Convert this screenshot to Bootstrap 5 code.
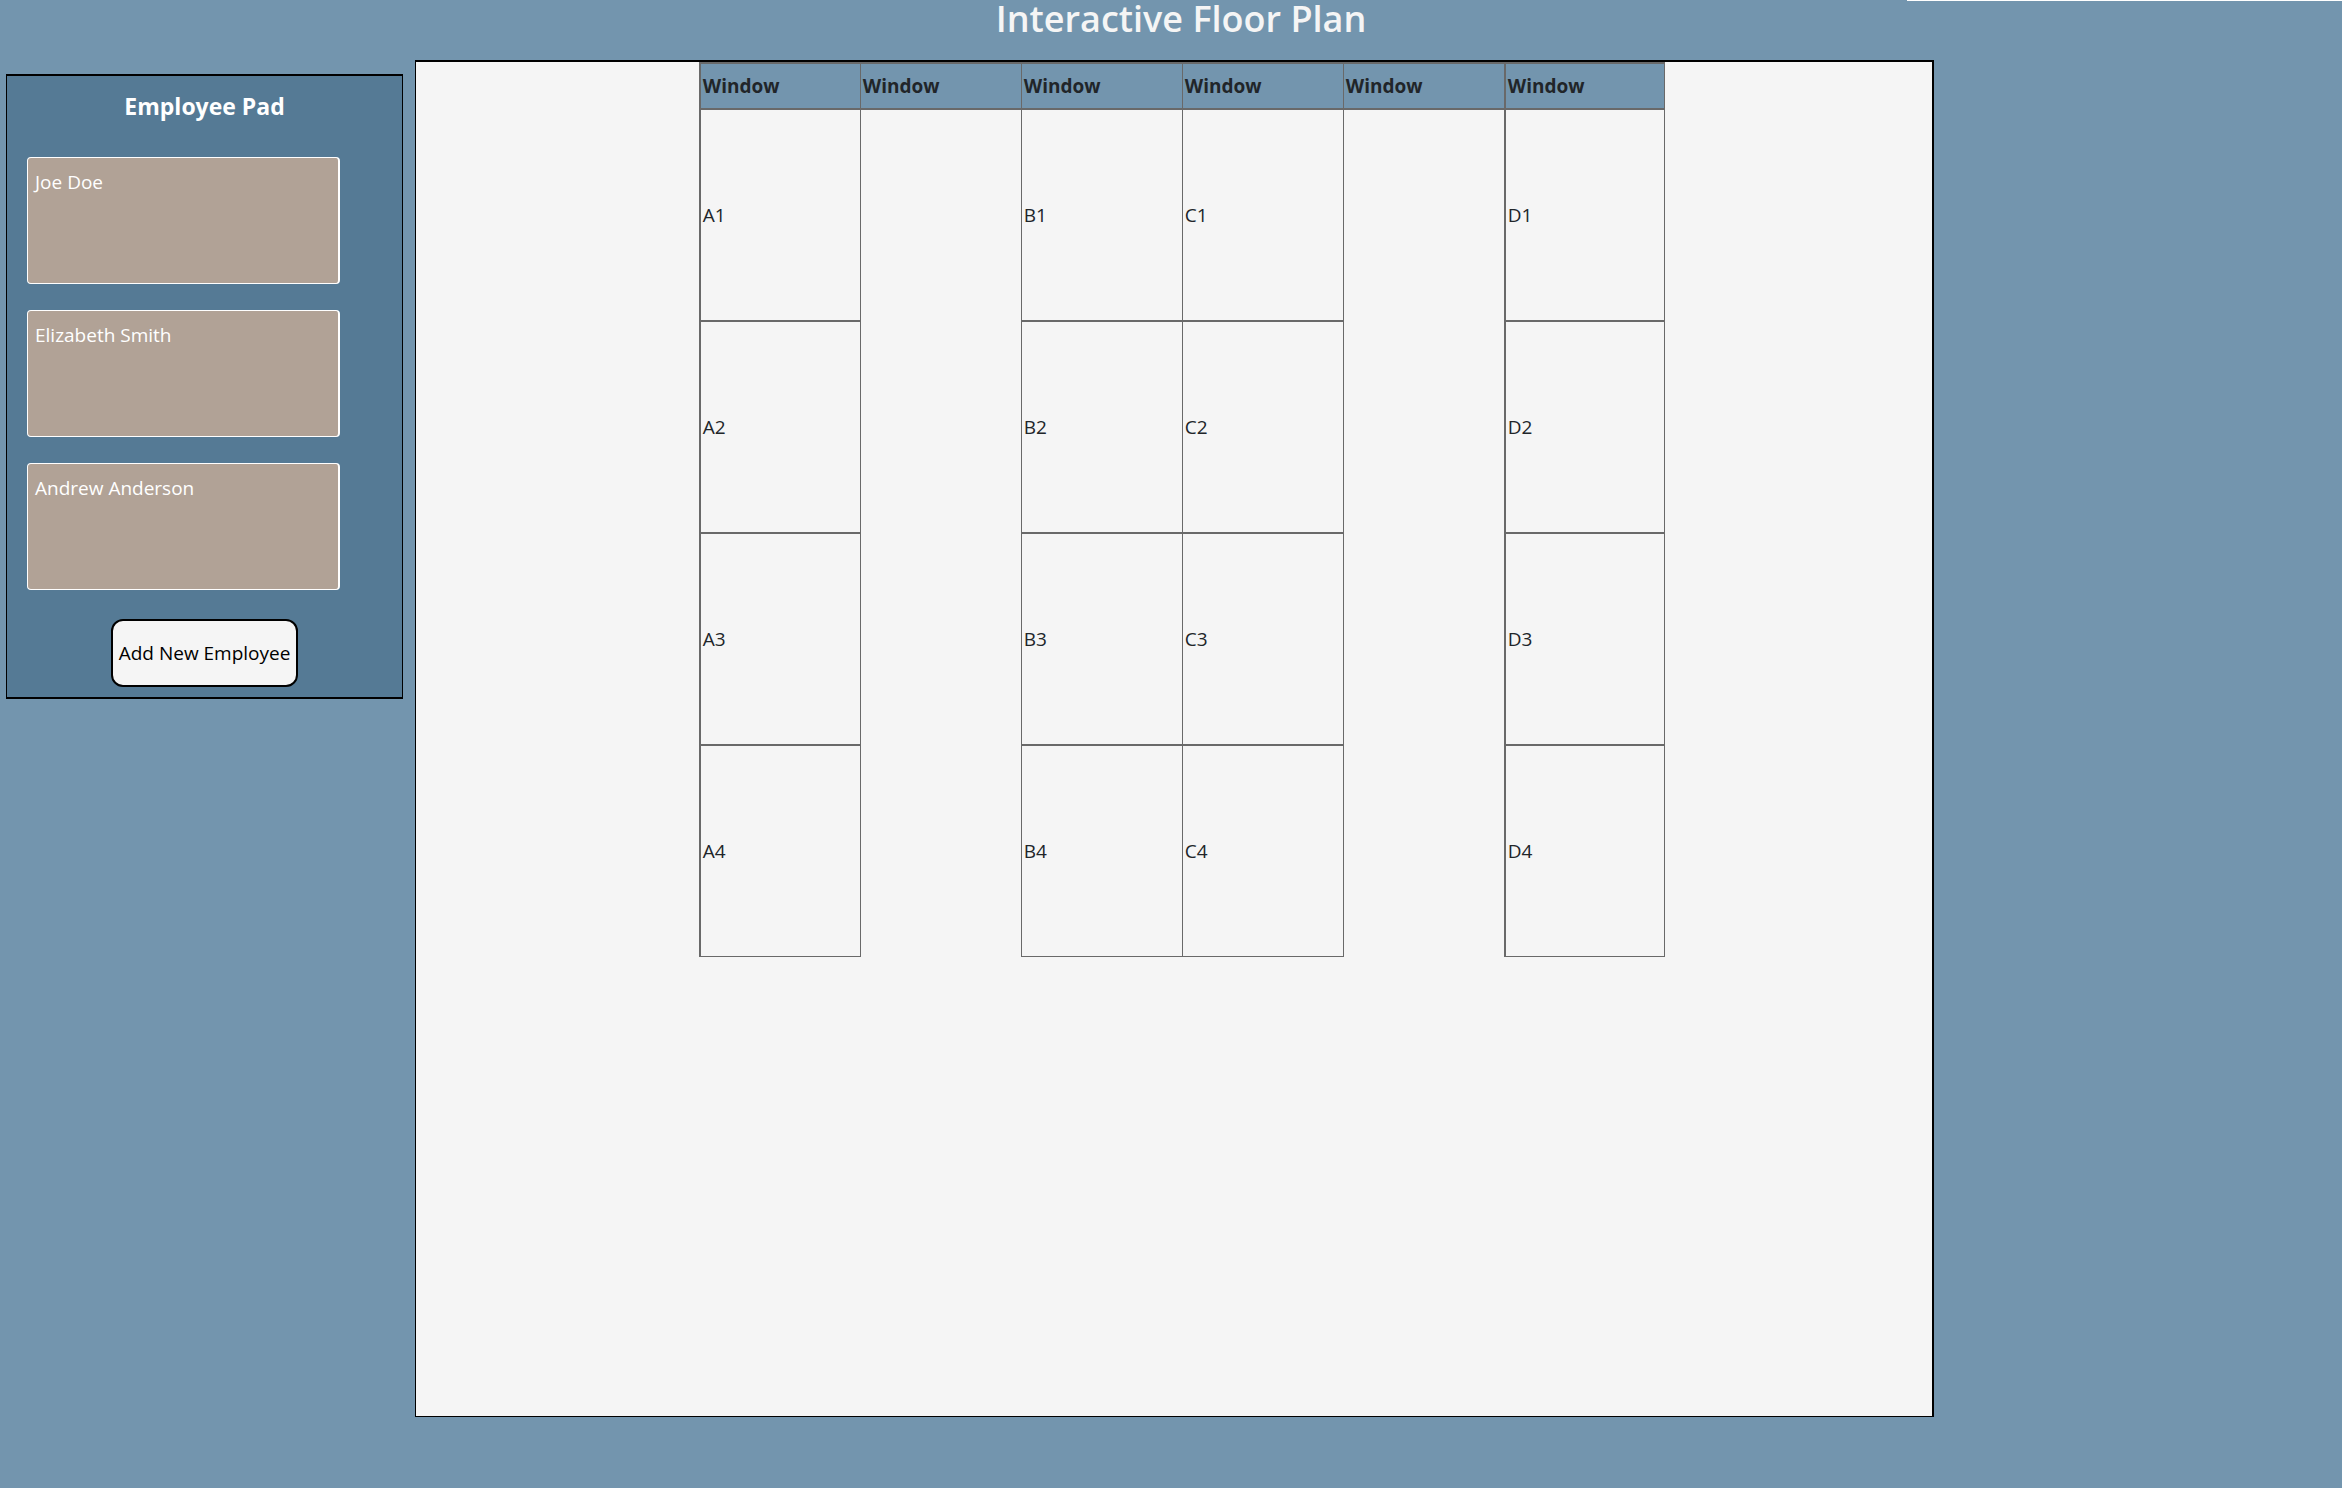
<!DOCTYPE html>
<html lang="en">
<head>
<meta charset="utf-8">
<meta name="viewport" content="width=device-width, initial-scale=1">
<title>Interactive Floor Plan</title>
<link href="https://cdn.jsdelivr.net/npm/bootstrap@5.3.0/dist/css/bootstrap.min.css" rel="stylesheet">
<style>
  body { background: #7395ae; font-family: "Open Sans", "Noto Sans", sans-serif; font-size: 19px; line-height: 32px; min-height: 100vh; }
  .top-line { height: 1px; width: 435px; }
  .plan-title { color: #f5f5f5; font-size: 36px; line-height: 36px; height: 59px; padding-left: 20px; font-weight: 600; }
  .layout { padding-left: 6px; gap: 12px; }
  .pad { width: 17%; margin-top: 14px; background: #557a95; border: 1px solid #000; border-width: 2px 1px; padding: 12px 20px 10px; }
  .pad h2 { font-size: 23px; line-height: 36px; margin-bottom: 33px; }
  .employee-list { gap: 26px; }
  .employee { width: 313px; max-width: 100%; height: 127px; background: #b1a296; border: 1px solid #fff; border-right-width: 2px; border-radius: 4px; padding: 8px 7px; }
  .add-btn { background: #f5f5f5; border: 2px solid #000; border-radius: 12px; color: #000; height: 68px; padding: 0 6px; margin-top: 29px; }
  .floor { width: 65%; min-height: 1357px; background: #f5f5f5; border: solid #000; border-width: 2px 2px 1px 1px; padding-left: 16px; }
  .seats { width: 966px; table-layout: fixed; border-collapse: separate; border-spacing: 0; color: #212529; }
  .seats th, .seats td { border: 0 solid #696969; border-top-width: 2px; border-left-width: 1px; padding: 0 2px; }
  .seats th { height: 46px; background: #7395ae; }
  .seats td { height: 212px; }
  .seats .wide { border-left-width: 2px; }
  .seats .end { border-right-width: 1px; }
  .seats tbody tr:last-child td:not(.aisle) { border-bottom-width: 1px; height: 213px; }
  .seats tbody tr + tr .aisle { border-top-width: 0; }
</style>
<script src="https://cdn.jsdelivr.net/npm/bootstrap@5.3.0/dist/js/bootstrap.bundle.min.js"></script>
</head>
<body>
<div class="top-line bg-white ms-auto"></div>
<h1 class="plan-title text-center m-0">Interactive Floor Plan</h1>
<div class="layout d-flex align-items-start">
  <aside class="pad d-flex flex-column">
    <h2 class="text-white text-center fw-bold">Employee Pad</h2>
    <ul class="employee-list list-unstyled d-flex flex-column m-0">
      <li class="employee text-white">Joe Doe</li>
      <li class="employee text-white">Elizabeth Smith</li>
      <li class="employee text-white">Andrew Anderson</li>
    </ul>
    <button type="button" class="add-btn align-self-center">Add New Employee</button>
  </aside>
  <main class="floor d-flex justify-content-center align-items-start">
    <table class="seats">
      <thead>
        <tr><th class="wide">Window</th><th>Window</th><th>Window</th><th>Window</th><th>Window</th><th class="wide end">Window</th></tr>
      </thead>
      <tbody>
        <tr><td class="wide">A1</td><td class="aisle"></td><td>B1</td><td>C1</td><td class="aisle"></td><td class="wide end">D1</td></tr>
        <tr><td class="wide">A2</td><td class="aisle"></td><td>B2</td><td>C2</td><td class="aisle"></td><td class="wide end">D2</td></tr>
        <tr><td class="wide">A3</td><td class="aisle"></td><td>B3</td><td>C3</td><td class="aisle"></td><td class="wide end">D3</td></tr>
        <tr><td class="wide">A4</td><td class="aisle"></td><td>B4</td><td>C4</td><td class="aisle"></td><td class="wide end">D4</td></tr>
      </tbody>
    </table>
  </main>
</div>
</body>
</html>
